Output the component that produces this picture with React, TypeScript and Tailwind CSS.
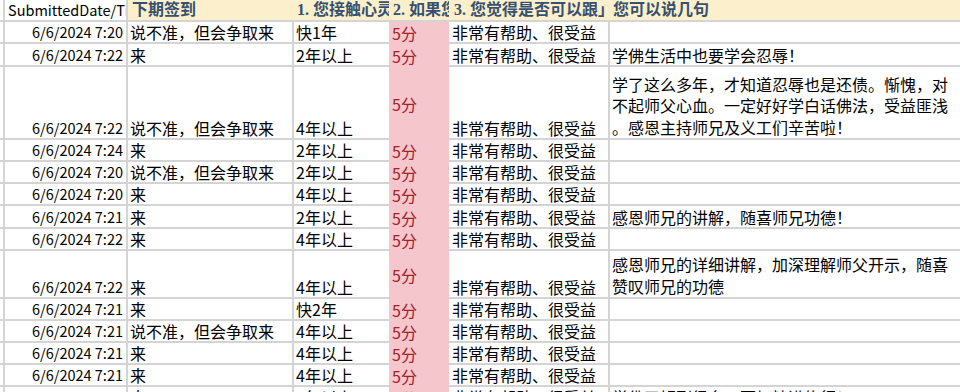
import React from 'react';

type RowData = {
  h: number;
  date: string;
  b: string;
  c: string;
  f: string[];
};

const rows: RowData[] = [
  { h: 22, date: '6/6/2024 7:20', b: '说不准，但会争取来', c: '快1年', f: [] },
  { h: 23, date: '6/6/2024 7:22', b: '来', c: '2年以上', f: ['学佛生活中也要学会忍辱！'] },
  {
    h: 73,
    date: '6/6/2024 7:22',
    b: '说不准，但会争取来',
    c: '4年以上',
    f: [
      '学了这么多年，才知道忍辱也是还债。惭愧，对',
      '不起师父心血。一定好好学白话佛法，受益匪浅',
      '。感恩主持师兄及义工们辛苦啦！',
    ],
  },
  { h: 22, date: '6/6/2024 7:24', b: '来', c: '2年以上', f: [] },
  { h: 22, date: '6/6/2024 7:20', b: '说不准，但会争取来', c: '2年以上', f: [] },
  { h: 22, date: '6/6/2024 7:20', b: '来', c: '4年以上', f: [] },
  { h: 23, date: '6/6/2024 7:21', b: '来', c: '2年以上', f: ['感恩师兄的讲解，随喜师兄功德！'] },
  { h: 22, date: '6/6/2024 7:22', b: '来', c: '4年以上', f: [] },
  {
    h: 48,
    date: '6/6/2024 7:22',
    b: '来',
    c: '4年以上',
    f: ['感恩师兄的详细讲解，加深理解师父开示，随喜', '赞叹师兄的功德'],
  },
  { h: 22, date: '6/6/2024 7:21', b: '来', c: '快2年', f: [] },
  { h: 22, date: '6/6/2024 7:21', b: '说不准，但会争取来', c: '4年以上', f: [] },
  { h: 22, date: '6/6/2024 7:21', b: '来', c: '4年以上', f: [] },
  { h: 22, date: '6/6/2024 7:21', b: '来', c: '4年以上', f: [] },
  { h: 22, date: '6/6/2024 7:21', b: '来', c: '4年以上', f: ['学佛了解到很多，更加精进修行！'] },
];

const FONT = "font-['Noto_Sans_CJK_SC',sans-serif]";

function DataRow({ r }: { r: RowData }) {
  return (
    <div className="flex shrink-0" style={{ height: r.h }}>
      <div className="w-[5px] shrink-0 border-r-2 border-b-2 border-[#d4d4d4]" />
      <div className="w-[123px] shrink-0 border-r-2 border-b-2 border-[#d4d4d4] flex items-end justify-end pr-[3px] overflow-hidden">
        <span className="text-[14.5px] leading-[20px] whitespace-nowrap text-black">{r.date}</span>
      </div>
      <div className="w-[166px] shrink-0 border-r-2 border-b-2 border-[#d4d4d4] flex items-end pl-[2px] overflow-hidden">
        <span className="text-[16px] leading-[20px] whitespace-nowrap text-black">{r.b}</span>
      </div>
      <div className="w-[95px] shrink-0 border-b-2 border-[#d4d4d4] flex items-end pl-[2px] overflow-hidden">
        <span className="text-[16px] leading-[20px] whitespace-nowrap text-black">{r.c}</span>
      </div>
      <div className="w-[60px] shrink-0 bg-[#f5c7cd] flex items-center pl-[3px] overflow-hidden">
        <span className="text-[16px] leading-[20px] whitespace-nowrap text-[#a3202a]">5分</span>
      </div>
      <div className="w-[161px] shrink-0 border-r-2 border-b-2 border-[#d4d4d4] flex items-end pl-[3px] overflow-hidden">
        <span className="text-[16px] leading-[20px] whitespace-nowrap text-black">非常有帮助、很受益</span>
      </div>
      <div className="flex-1 border-b-2 border-[#d4d4d4] flex flex-col justify-end pl-[2px] overflow-hidden">
        {r.f.map((line, i) => (
          <div
            key={i}
            className={
              r.f.length > 1
                ? 'text-[16px] leading-[21.5px] whitespace-nowrap text-black'
                : 'text-[16px] leading-[20px] whitespace-nowrap text-black'
            }
          >
            {line}
          </div>
        ))}
      </div>
    </div>
  );
}

export default function App() {
  const head = "font-['Liberation_Serif','Noto_Sans_CJK_SC',serif] font-bold text-[16px] leading-[20px] whitespace-nowrap text-[#36506f]";
  return (
    <div className={`w-[960px] h-[392px] overflow-hidden bg-white flex flex-col ${FONT}`}>
      <div className="flex shrink-0 h-[22px]">
        <div className="w-[5px] shrink-0 border-r-2 border-b-2 border-[#d4d4d4]" />
        <div className="w-[123px] shrink-0 border-r-2 border-b-2 border-[#d4d4d4] flex items-end pl-[3px] overflow-hidden">
          <span className="text-[14.5px] leading-[20px] whitespace-nowrap text-black">SubmittedDate/Time</span>
        </div>
        <div className="w-[166px] shrink-0 bg-[#fcf0cc] border-b-2 border-[#d4d4d4] flex items-end pl-[4px] overflow-hidden">
          <span className={head}>下期签到</span>
        </div>
        <div className="w-[95px] shrink-0 bg-[#fcf0cc] border-b-2 border-[#d4d4d4] flex items-end pl-[3px] overflow-hidden">
          <span className={head}>1. 您接触心灵</span>
        </div>
        <div className="w-[60px] shrink-0 bg-[#fcf0cc] border-b-2 border-[#d4d4d4] flex items-end pl-[4px] overflow-hidden">
          <span className={head}>2. 如果您</span>
        </div>
        <div className="w-[161px] shrink-0 bg-[#fcf0cc] border-b-2 border-[#d4d4d4] flex items-end pl-[5px] overflow-hidden">
          <span className={head}>3. 您觉得是否可以跟」</span>
        </div>
        <div className="flex-1 bg-[#fcf0cc] border-b-2 border-[#d4d4d4] flex items-end pl-[3px] overflow-hidden">
          <span className={head}>您可以说几句</span>
        </div>
      </div>
      {rows.map((r, i) => (
        <DataRow key={i} r={r} />
      ))}
    </div>
  );
}
